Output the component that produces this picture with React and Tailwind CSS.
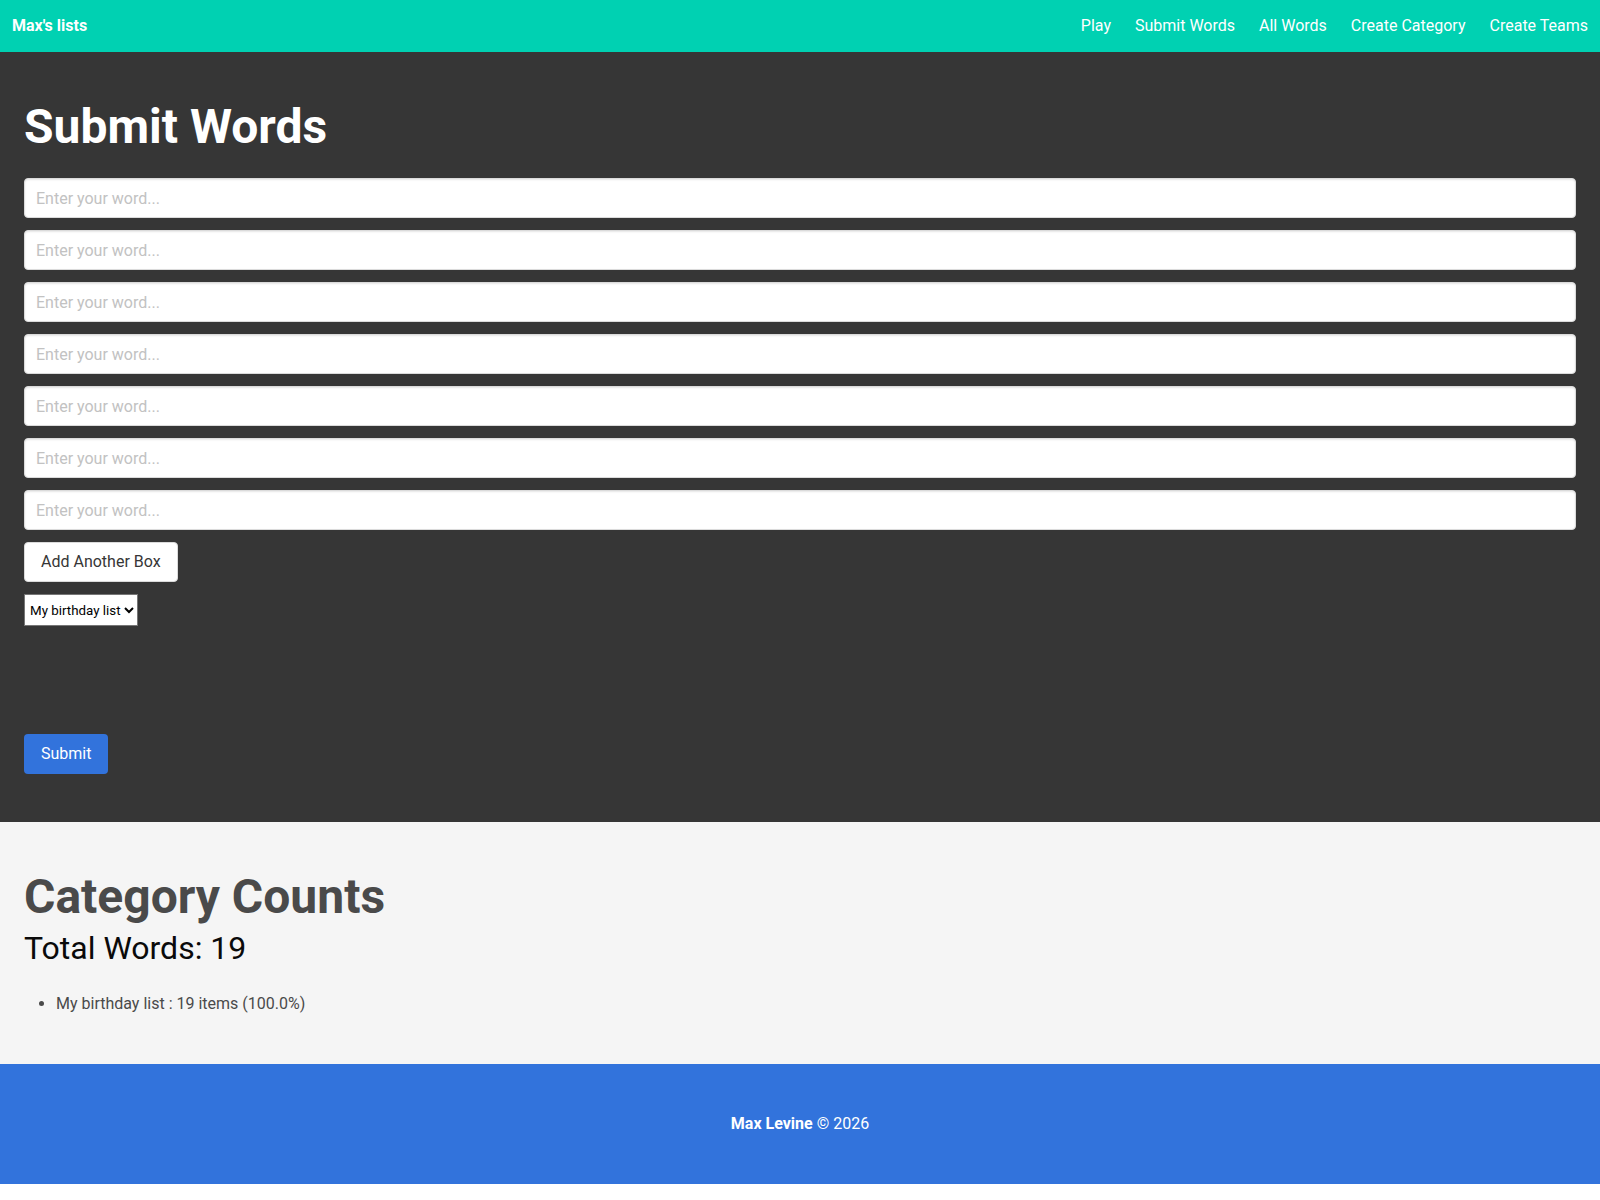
import { useState } from 'react'

const font = { fontFamily: 'Roboto, "Noto Sans", "Liberation Sans", sans-serif' }

const links = ['Play', 'Submit Words', 'All Words', 'Create Category', 'Create Teams']

function Navbar() {
  return (
    <nav className="flex h-[52px] items-stretch bg-[#00d1b2] text-white">
      <a className="flex items-center px-3 font-bold">Max's lists</a>
      <div className="ml-auto flex items-stretch">
        {links.map((link) => (
          <a key={link} className="flex items-center px-3">
            {link}
          </a>
        ))}
      </div>
    </nav>
  )
}

function SubmitSection() {
  const [words, setWords] = useState(Array(7).fill(''))

  return (
    <section className="bg-[#363636] px-6 py-12">
      <h1 className="mb-6 text-[48px] leading-[1.125] font-bold text-white">Submit Words</h1>
      {words.map((word, index) => (
        <div key={index} className="mb-3">
          <input
            className="h-10 w-full rounded border border-[#dbdbdb] bg-white px-[11px] text-[16px] text-[#363636] shadow-[inset_0_1px_2px_rgba(10,10,10,0.1)] outline-none placeholder:text-[#c2c2c2]"
            placeholder="Enter your word..."
            value={word}
            onChange={(event) =>
              setWords((prev) => prev.map((w, i) => (i === index ? event.target.value : w)))
            }
          />
        </div>
      ))}
      <button
        type="button"
        className="mb-3 h-10 rounded border border-[#dbdbdb] bg-white px-4 text-[16px] text-[#363636]"
        onClick={() => setWords((prev) => [...prev, ''])}
      >
        Add Another Box
      </button>
      <div>
        <select className="h-8 border border-[#767676] bg-white pl-px pr-0 text-[13.33px] text-black">
          <option>My birthday list</option>
        </select>
      </div>
      <button
        type="button"
        className="mt-[108px] h-10 rounded border border-transparent bg-[#3273dc] px-4 text-[16px] text-white"
      >
        Submit
      </button>
    </section>
  )
}

function CountsSection() {
  return (
    <section className="bg-[#f5f5f5] px-6 py-12">
      <h1 className="text-[48px] leading-[1.125] font-bold text-[#4a4a4a]">Category Counts</h1>
      <h2 className="mt-1 text-[32px] leading-[1.25] text-[#0a0a0a]">Total Words: 19</h2>
      <ul className="mt-6 list-disc pl-8 text-[16px] leading-6 text-[#4a4a4a]">
        <li>My birthday list : 19 items (100.0%)</li>
      </ul>
    </section>
  )
}

function Footer() {
  return (
    <footer className="bg-[#3273dc] px-6 py-12 text-center text-white">
      <p>
        <strong>Max Levine</strong> © 2026
      </p>
    </footer>
  )
}

export default function App() {
  return (
    <div className="min-h-screen bg-white text-[16px] leading-6" style={font}>
      <Navbar />
      <SubmitSection />
      <CountsSection />
      <Footer />
    </div>
  )
}
